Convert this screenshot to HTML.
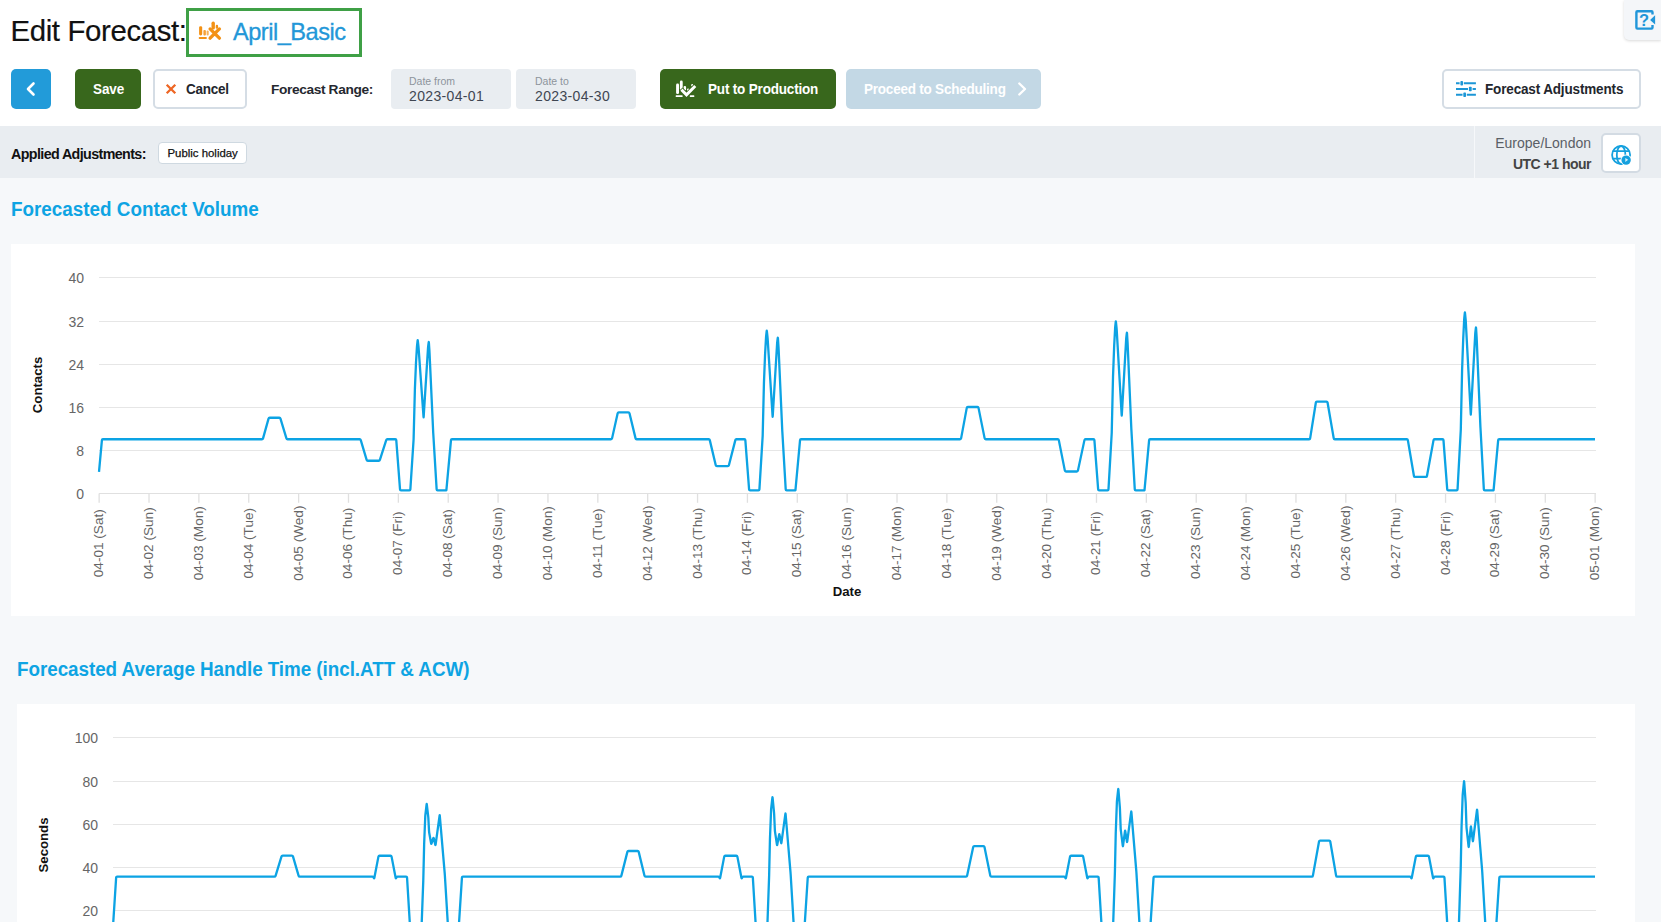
<!DOCTYPE html>
<html>
<head>
<meta charset="utf-8">
<title>Edit Forecast</title>
<style>
*{box-sizing:border-box;margin:0;padding:0}
html,body{width:1661px;height:922px;overflow:hidden;background:#f6f8fa;font-family:"Liberation Sans",sans-serif;color:#222}
.abs{position:absolute}
.t{position:absolute;white-space:nowrap}
#top{position:absolute;left:0;top:0;width:1661px;height:126px;background:#fff}
#bar{position:absolute;left:0;top:126px;width:1661px;height:52px;background:#e9edf1}
.namebox{position:absolute;left:186px;top:8px;width:176px;height:49px;border:3px solid #3fa046;background:#fff}
.btn{position:absolute;top:69px;height:40px;border-radius:5px}
.b-back{left:11px;width:40px;background:#229bd9}
.b-save{left:75px;width:66px;background:#38671c}
.b-cancel{left:153px;width:94px;background:#fff;border:2px solid #d5dde5}
.b-prod{left:660px;width:176px;background:#38671c}
.b-sched{left:846px;width:195px;background:#c3d8e5}
.b-adj{left:1442px;width:199px;background:#fff;border:2px solid #d5dde5}
.bt{font-weight:bold;font-size:13.5px;line-height:16px;transform:scaleY(1.07);transform-origin:0 76%}
.inp{position:absolute;top:69px;width:120px;height:40px;background:#e9edf1;border-radius:4px}
.chip{position:absolute;left:158px;top:142px;width:89px;height:22px;background:#fff;border:1px solid #cfd9e1;border-radius:4px}
.sec{font-weight:bold;font-size:18.85px;line-height:22px;color:#0ea4e3;transform:scaleY(1.06);transform-origin:0 78%}
.panel{position:absolute;background:#fff}
svg.ch{position:absolute;overflow:hidden}
svg.ch line{shape-rendering:crispEdges}
.yl{font-size:14px;fill:#666;font-family:"Liberation Sans",sans-serif}
.xl{font-size:13.6px;fill:#666;font-family:"Liberation Sans",sans-serif}
.at{font-size:13.2px;font-weight:bold;fill:#111;font-family:"Liberation Sans",sans-serif}
</style>
</head>
<body>
<div id="top"></div>
<div id="bar"></div>

<!-- title -->
<div class="t" id="t_h1" style="left:10.5px;top:12.7px;-webkit-text-stroke:0.2px #111;font-size:29.4px;line-height:36px;color:#111;letter-spacing:-0.37px">Edit Forecast:</div>
<div class="namebox"></div>
<svg class="abs" style="left:196px;top:18px" width="26" height="24" viewBox="196 18 26 24">
  <g fill="#f39114">
    <rect x="199.1" y="26.2" width="3.1" height="9.3" rx="1.4"/>
    <rect x="203.4" y="30" width="2.5" height="5.5" rx="1" opacity="0.85"/>
    <rect x="206.6" y="30.6" width="2.1" height="4.9" rx="1" opacity="0.7"/>
    <rect x="198.7" y="37.1" width="8.2" height="1.9" rx="0.9"/>
    <rect x="211.5" y="21.6" width="3.4" height="8" rx="1.6"/>
    <rect x="215.7" y="24.8" width="2.4" height="4" rx="1.1"/>
  </g>
  <path d="M210.1 28.9l9.3 9.3M219.4 28.9l-9.3 9.3" fill="none" stroke="#f39114" stroke-width="3.3" stroke-linecap="round"/>
</svg>
<div class="t" id="t_name" style="left:233px;top:16.5px;-webkit-text-stroke:0.3px #2397d8;font-size:23.6px;line-height:30px;color:#2397d8;letter-spacing:-0.5px">April_Basic</div>

<!-- toolbar -->
<div class="btn b-back"><svg class="abs" style="left:13px;top:12px" width="14" height="16" viewBox="0 0 14 16"><path d="M9.5 2.5L4 8l5.5 5.5" fill="none" stroke="#fff" stroke-width="2.6" stroke-linecap="round" stroke-linejoin="round"/></svg></div>
<div class="btn b-save"></div>
<div class="t bt" id="t_save" style="left:93px;top:81.5px;color:#fff;letter-spacing:-0.1px">Save</div>
<div class="btn b-cancel"></div>
<svg class="abs" style="left:164px;top:82px" width="14" height="14" viewBox="0 0 14 14"><path d="M2.700 2.700l8.600 8.600M11.300 2.700l-8.600 8.600" fill="none" stroke="#ee6624" stroke-width="2.300"/></svg>
<div class="t bt" id="t_cancel" style="left:186px;top:81.5px;color:#23262d;letter-spacing:-0.25px">Cancel</div>
<div class="t" id="t_range" style="left:271px;top:81.5px;font-size:13.7px;line-height:16px;font-weight:bold;color:#25282f;letter-spacing:-0.36px">Forecast Range:</div>
<div class="inp" style="left:391px"></div>
<div class="t" id="t_dfl" style="left:409px;top:75px;font-size:10.5px;line-height:12px;color:#8d949c">Date from</div>
<div class="t" id="t_dfv" style="left:409px;top:88px;font-size:14px;line-height:16px;color:#3f4652;letter-spacing:0.35px">2023-04-01</div>
<div class="inp" style="left:516px"></div>
<div class="t" id="t_dtl" style="left:535px;top:75px;font-size:10.5px;line-height:12px;color:#8d949c">Date to</div>
<div class="t" id="t_dtv" style="left:535px;top:88px;font-size:14px;line-height:16px;color:#3f4652;letter-spacing:0.35px">2023-04-30</div>

<div class="btn b-prod"></div>
<svg class="abs" style="left:674px;top:78px" width="24" height="22" viewBox="674 78 24 22">
  <g fill="#fff">
    <rect x="676.1" y="83.6" width="2.9" height="10.5" rx="1.3"/>
    <rect x="679.9" y="80.6" width="2.8" height="9.5" rx="1.3"/>
    <rect x="683.6" y="86" width="2.5" height="4.6" rx="1.1"/>
    <rect x="687" y="88.6" width="2.1" height="2.6" rx="1"/>
    <rect x="691.2" y="84" width="2" height="2.6" rx="0.9"/>
    <rect x="675.7" y="95.2" width="6.9" height="1.8" rx="0.5"/>
    <rect x="689.8" y="95.2" width="4.5" height="1.8" rx="0.5"/>
  </g>
  <path d="M682.5 90.7l4 4.1l7.7-7.8" fill="none" stroke="#38671c" stroke-width="4.6" stroke-linecap="square" stroke-linejoin="miter"/>
  <path d="M682.5 90.7l4 4.1l7.7-7.8" fill="none" stroke="#fff" stroke-width="3" stroke-linecap="square" stroke-linejoin="miter"/>
</svg>
<div class="t bt" id="t_prod" style="left:708px;top:81.5px;color:#fff;letter-spacing:-0.18px">Put to Production</div>
<div class="btn b-sched"></div>
<div class="t bt" id="t_sched" style="left:864px;top:81.5px;color:#fff;letter-spacing:-0.22px">Proceed to Scheduling</div>
<svg class="abs" style="left:1015px;top:81px" width="14" height="16" viewBox="0 0 14 16"><path d="M4.3 2.5L10 8l-5.700 5.500" fill="none" stroke="#fff" stroke-width="2.4" stroke-linecap="round" stroke-linejoin="round"/></svg>

<div class="btn b-adj"></div>
<svg class="abs" style="left:1454px;top:78px" width="24" height="22" viewBox="1454 78 24 22">
  <g fill="none" stroke="#1c96d6" stroke-width="2">
    <path d="M1456 83.3h3.6M1463.800 83.3h12.100M1456 89h12M1472.600 89h3.300M1456 94.800h6.500M1466.800 94.800h9.100"/>
  </g>
  <g fill="#1c96d6">
    <rect x="1460.400" y="81.100" width="2.600" height="4.400" rx="0.8"/>
    <rect x="1468.900" y="86.800" width="2.800" height="4.400" rx="0.8"/>
    <rect x="1463.300" y="92.600" width="2.700" height="4.400" rx="0.800"/>
  </g>
</svg>
<div class="t bt" id="t_adj" style="left:1485px;top:81.5px;color:#23262d;letter-spacing:-0.15px">Forecast Adjustments</div>

<!-- applied adjustments bar -->
<div class="t" id="t_applied" style="left:11px;top:145.600px;font-size:14.3px;line-height:16px;font-weight:bold;color:#111;letter-spacing:-0.62px">Applied Adjustments:</div>
<div class="chip"></div>
<div class="t" id="t_chip" style="left:167.500px;top:146px;font-size:11.4px;line-height:14px;color:#111;-webkit-text-stroke:0.25px #111">Public holiday</div>
<div class="abs" style="left:1474px;top:126px;width:1px;height:52px;background:#f6f8fa"></div>
<div class="t" id="t_tz" style="right:70px;top:134px;font-size:14px;line-height:18px;color:#5a5f66;text-align:right">Europe/London</div>
<div class="t" id="t_utc" style="right:70px;top:155.1px;font-size:14px;line-height:18px;color:#444;font-weight:bold;text-align:right;letter-spacing:-0.5px">UTC +1 hour</div>
<div class="abs" style="left:1601px;top:133px;width:40px;height:40px;background:#fff;border:2px solid #d3dbe3;border-radius:5px"></div>
<svg class="abs" style="left:1608px;top:142px" width="28" height="26" viewBox="1608 142 28 26">
  <g fill="none" stroke="#14a0de" stroke-width="1.800">
    <circle cx="1621.100" cy="155" r="9"/>
    <ellipse cx="1621.100" cy="155" rx="4.300" ry="9"/>
    <path d="M1612.800 151.200h16.600M1612.800 158.600h16.600"/>
  </g>
  <circle cx="1626.100" cy="160.100" r="5.600" fill="#fff"/>
  <circle cx="1626.100" cy="160.100" r="4.700" fill="#14a0de"/>
  <path d="M1625.300 157.900v4.200l2.900-2.300z" fill="#d8effa"/>
</svg>

<!-- help tab -->
<div class="abs" style="left:1624px;top:0;width:37px;height:40px;background:#f4f6f9;border-bottom-left-radius:5px;box-shadow:0 1px 3px rgba(0,0,0,0.15)"></div>
<svg class="abs" style="left:1633px;top:8px" width="26" height="24" viewBox="1633 8 26 24">
  <path d="M1652.500 14.600V12.200a1 1 0 0 0-1-1H1637.400a1 1 0 0 0-1 1v15.400a1 1 0 0 0 1 1h14.100a1 1 0 0 0 1-1v-2.700" fill="none" stroke="#2196d9" stroke-width="2.400"/>
  <path d="M1650.100 19.900l5-4.600v9.200z" fill="#2196d9"/>
  <text x="1644" y="25.900" text-anchor="middle" font-family="Liberation Sans, sans-serif" font-weight="bold" font-size="16.500" fill="#2196d9">?</text>
</svg>

<!-- section 1 -->
<div class="t sec" id="t_sec1" style="left:11px;top:198.800px">Forecasted Contact Volume</div>
<div class="panel" style="left:11px;top:243.500px;width:1624px;height:372.200px"></div>
<svg class="ch" style="left:11px;top:244px" width="1624" height="371" viewBox="11 244 1624 371">
<line x1="98.5" x2="1596.0" y1="450.5" y2="450.5" stroke="#e6e6e6"/>
<line x1="98.5" x2="1596.0" y1="407.5" y2="407.5" stroke="#e6e6e6"/>
<line x1="98.5" x2="1596.0" y1="364.5" y2="364.5" stroke="#e6e6e6"/>
<line x1="98.5" x2="1596.0" y1="321.5" y2="321.5" stroke="#e6e6e6"/>
<line x1="98.5" x2="1596.0" y1="277.5" y2="277.5" stroke="#e6e6e6"/>
<line x1="98.5" x2="1596.0" y1="493.5" y2="493.5" stroke="#e0e0e0"/>
<line x1="99.15" x2="99.15" y1="493.5" y2="502.8" stroke="#e0e0e0" stroke-width="1.3" style="shape-rendering:auto"/>
<line x1="149.02" x2="149.02" y1="493.5" y2="502.8" stroke="#e0e0e0" stroke-width="1.3" style="shape-rendering:auto"/>
<line x1="198.88" x2="198.88" y1="493.5" y2="502.8" stroke="#e0e0e0" stroke-width="1.3" style="shape-rendering:auto"/>
<line x1="248.75" x2="248.75" y1="493.5" y2="502.8" stroke="#e0e0e0" stroke-width="1.3" style="shape-rendering:auto"/>
<line x1="298.62" x2="298.62" y1="493.5" y2="502.8" stroke="#e0e0e0" stroke-width="1.3" style="shape-rendering:auto"/>
<line x1="348.48" x2="348.48" y1="493.5" y2="502.8" stroke="#e0e0e0" stroke-width="1.3" style="shape-rendering:auto"/>
<line x1="398.35" x2="398.35" y1="493.5" y2="502.8" stroke="#e0e0e0" stroke-width="1.3" style="shape-rendering:auto"/>
<line x1="448.22" x2="448.22" y1="493.5" y2="502.8" stroke="#e0e0e0" stroke-width="1.3" style="shape-rendering:auto"/>
<line x1="498.08" x2="498.08" y1="493.5" y2="502.8" stroke="#e0e0e0" stroke-width="1.3" style="shape-rendering:auto"/>
<line x1="547.95" x2="547.95" y1="493.5" y2="502.8" stroke="#e0e0e0" stroke-width="1.3" style="shape-rendering:auto"/>
<line x1="597.82" x2="597.82" y1="493.5" y2="502.8" stroke="#e0e0e0" stroke-width="1.3" style="shape-rendering:auto"/>
<line x1="647.68" x2="647.68" y1="493.5" y2="502.8" stroke="#e0e0e0" stroke-width="1.3" style="shape-rendering:auto"/>
<line x1="697.55" x2="697.55" y1="493.5" y2="502.8" stroke="#e0e0e0" stroke-width="1.3" style="shape-rendering:auto"/>
<line x1="747.42" x2="747.42" y1="493.5" y2="502.8" stroke="#e0e0e0" stroke-width="1.3" style="shape-rendering:auto"/>
<line x1="797.28" x2="797.28" y1="493.5" y2="502.8" stroke="#e0e0e0" stroke-width="1.3" style="shape-rendering:auto"/>
<line x1="847.15" x2="847.15" y1="493.5" y2="502.8" stroke="#e0e0e0" stroke-width="1.3" style="shape-rendering:auto"/>
<line x1="897.02" x2="897.02" y1="493.5" y2="502.8" stroke="#e0e0e0" stroke-width="1.3" style="shape-rendering:auto"/>
<line x1="946.88" x2="946.88" y1="493.5" y2="502.8" stroke="#e0e0e0" stroke-width="1.3" style="shape-rendering:auto"/>
<line x1="996.75" x2="996.75" y1="493.5" y2="502.8" stroke="#e0e0e0" stroke-width="1.3" style="shape-rendering:auto"/>
<line x1="1046.62" x2="1046.62" y1="493.5" y2="502.8" stroke="#e0e0e0" stroke-width="1.3" style="shape-rendering:auto"/>
<line x1="1096.48" x2="1096.48" y1="493.5" y2="502.8" stroke="#e0e0e0" stroke-width="1.3" style="shape-rendering:auto"/>
<line x1="1146.35" x2="1146.35" y1="493.5" y2="502.8" stroke="#e0e0e0" stroke-width="1.3" style="shape-rendering:auto"/>
<line x1="1196.22" x2="1196.22" y1="493.5" y2="502.8" stroke="#e0e0e0" stroke-width="1.3" style="shape-rendering:auto"/>
<line x1="1246.08" x2="1246.08" y1="493.5" y2="502.8" stroke="#e0e0e0" stroke-width="1.3" style="shape-rendering:auto"/>
<line x1="1295.95" x2="1295.95" y1="493.5" y2="502.8" stroke="#e0e0e0" stroke-width="1.3" style="shape-rendering:auto"/>
<line x1="1345.82" x2="1345.82" y1="493.5" y2="502.8" stroke="#e0e0e0" stroke-width="1.3" style="shape-rendering:auto"/>
<line x1="1395.68" x2="1395.68" y1="493.5" y2="502.8" stroke="#e0e0e0" stroke-width="1.3" style="shape-rendering:auto"/>
<line x1="1445.55" x2="1445.55" y1="493.5" y2="502.8" stroke="#e0e0e0" stroke-width="1.3" style="shape-rendering:auto"/>
<line x1="1495.42" x2="1495.42" y1="493.5" y2="502.8" stroke="#e0e0e0" stroke-width="1.3" style="shape-rendering:auto"/>
<line x1="1545.28" x2="1545.28" y1="493.5" y2="502.8" stroke="#e0e0e0" stroke-width="1.3" style="shape-rendering:auto"/>
<line x1="1595.15" x2="1595.15" y1="493.5" y2="502.8" stroke="#e0e0e0" stroke-width="1.3" style="shape-rendering:auto"/>
<text x="84" y="498.6" text-anchor="end" class="yl">0</text>
<text x="84" y="455.6" text-anchor="end" class="yl">8</text>
<text x="84" y="412.6" text-anchor="end" class="yl">16</text>
<text x="84" y="369.6" text-anchor="end" class="yl">24</text>
<text x="84" y="326.6" text-anchor="end" class="yl">32</text>
<text x="84" y="283.4" text-anchor="end" class="yl">40</text>
<text transform="translate(103.1 543.2) rotate(-90)" text-anchor="middle" class="xl">04-01 (Sat)</text>
<text transform="translate(153.0 543.2) rotate(-90)" text-anchor="middle" class="xl">04-02 (Sun)</text>
<text transform="translate(202.8 543.2) rotate(-90)" text-anchor="middle" class="xl">04-03 (Mon)</text>
<text transform="translate(252.7 543.2) rotate(-90)" text-anchor="middle" class="xl">04-04 (Tue)</text>
<text transform="translate(302.6 543.2) rotate(-90)" text-anchor="middle" class="xl">04-05 (Wed)</text>
<text transform="translate(352.4 543.2) rotate(-90)" text-anchor="middle" class="xl">04-06 (Thu)</text>
<text transform="translate(402.3 543.2) rotate(-90)" text-anchor="middle" class="xl">04-07 (Fri)</text>
<text transform="translate(452.2 543.2) rotate(-90)" text-anchor="middle" class="xl">04-08 (Sat)</text>
<text transform="translate(502.0 543.2) rotate(-90)" text-anchor="middle" class="xl">04-09 (Sun)</text>
<text transform="translate(551.9 543.2) rotate(-90)" text-anchor="middle" class="xl">04-10 (Mon)</text>
<text transform="translate(601.8 543.2) rotate(-90)" text-anchor="middle" class="xl">04-11 (Tue)</text>
<text transform="translate(651.6 543.2) rotate(-90)" text-anchor="middle" class="xl">04-12 (Wed)</text>
<text transform="translate(701.5 543.2) rotate(-90)" text-anchor="middle" class="xl">04-13 (Thu)</text>
<text transform="translate(751.4 543.2) rotate(-90)" text-anchor="middle" class="xl">04-14 (Fri)</text>
<text transform="translate(801.2 543.2) rotate(-90)" text-anchor="middle" class="xl">04-15 (Sat)</text>
<text transform="translate(851.1 543.2) rotate(-90)" text-anchor="middle" class="xl">04-16 (Sun)</text>
<text transform="translate(901.0 543.2) rotate(-90)" text-anchor="middle" class="xl">04-17 (Mon)</text>
<text transform="translate(950.8 543.2) rotate(-90)" text-anchor="middle" class="xl">04-18 (Tue)</text>
<text transform="translate(1000.7 543.2) rotate(-90)" text-anchor="middle" class="xl">04-19 (Wed)</text>
<text transform="translate(1050.6 543.2) rotate(-90)" text-anchor="middle" class="xl">04-20 (Thu)</text>
<text transform="translate(1100.4 543.2) rotate(-90)" text-anchor="middle" class="xl">04-21 (Fri)</text>
<text transform="translate(1150.3 543.2) rotate(-90)" text-anchor="middle" class="xl">04-22 (Sat)</text>
<text transform="translate(1200.2 543.2) rotate(-90)" text-anchor="middle" class="xl">04-23 (Sun)</text>
<text transform="translate(1250.0 543.2) rotate(-90)" text-anchor="middle" class="xl">04-24 (Mon)</text>
<text transform="translate(1299.9 543.2) rotate(-90)" text-anchor="middle" class="xl">04-25 (Tue)</text>
<text transform="translate(1349.8 543.2) rotate(-90)" text-anchor="middle" class="xl">04-26 (Wed)</text>
<text transform="translate(1399.6 543.2) rotate(-90)" text-anchor="middle" class="xl">04-27 (Thu)</text>
<text transform="translate(1449.5 543.2) rotate(-90)" text-anchor="middle" class="xl">04-28 (Fri)</text>
<text transform="translate(1499.4 543.2) rotate(-90)" text-anchor="middle" class="xl">04-29 (Sat)</text>
<text transform="translate(1549.2 543.2) rotate(-90)" text-anchor="middle" class="xl">04-30 (Sun)</text>
<text transform="translate(1599.1 543.2) rotate(-90)" text-anchor="middle" class="xl">05-01 (Mon)</text>
<text transform="translate(42 385) rotate(-90)" text-anchor="middle" class="at">Contacts</text>
<text x="847" y="596" text-anchor="middle" class="at">Date</text>
<path d="M99.00 471.84 L101.92 440.15 Q102.00 439.25 102.90 439.25 L261.90 439.25 Q262.80 439.25 263.04 438.38 L268.56 418.62 Q268.80 417.75 269.70 417.75 L279.30 417.75 Q280.20 417.75 280.46 418.61 L286.44 438.39 Q286.70 439.25 287.60 439.25 L359.60 439.25 Q360.50 439.25 360.76 440.11 L366.64 459.89 Q366.90 460.75 367.80 460.75 L378.70 460.75 Q379.60 460.75 379.88 459.89 L386.22 440.11 Q386.50 439.25 387.40 439.25 L395.30 439.25 Q396.20 439.25 396.27 440.15 L400.03 489.42 Q400.10 490.31 401.00 490.31 L409.40 490.31 Q410.30 490.31 410.36 489.41 L413.54 440.28 Q413.60 439.38 413.62 438.48 L414.88 389.73 Q414.90 388.83 414.94 387.93 L415.96 363.69 Q416.00 362.79 416.05 361.89 L416.95 346.84 Q417.00 345.94 417.10 345.05 L417.60 340.71 Q417.70 339.81 417.80 340.71 L418.40 345.81 Q418.50 346.71 418.56 347.60 L423.54 416.85 Q423.60 417.75 423.66 416.85 L428.04 347.63 Q428.10 346.73 428.22 345.84 L428.68 342.32 Q428.80 341.43 428.86 342.32 L429.44 351.14 Q429.50 352.04 429.54 352.93 L433.16 431.47 Q433.20 432.37 433.25 433.27 L436.65 489.41 Q436.70 490.31 437.60 490.31 L445.50 490.31 Q446.40 490.31 446.38 490.31 L446.38 490.31 Q446.37 490.31 446.45 489.42 L450.98 440.15 Q451.07 439.25 451.97 439.25 L610.97 439.25 Q611.87 439.25 612.06 438.37 L617.67 413.25 Q617.87 412.38 618.77 412.38 L628.37 412.38 Q629.27 412.38 629.48 413.25 L635.56 438.38 Q635.77 439.25 636.67 439.25 L708.67 439.25 Q709.57 439.25 709.78 440.13 L715.76 465.25 Q715.97 466.12 716.87 466.12 L727.77 466.12 Q728.67 466.12 728.89 465.25 L735.34 440.12 Q735.57 439.25 736.47 439.25 L744.37 439.25 Q745.27 439.25 745.34 440.15 L749.10 489.42 Q749.17 490.31 750.07 490.31 L758.47 490.31 Q759.37 490.31 759.42 489.41 L762.61 436.90 Q762.67 436.00 762.69 435.10 L763.94 383.15 Q763.97 382.25 764.00 381.35 L765.03 355.47 Q765.07 354.57 765.12 353.67 L766.02 337.55 Q766.07 336.65 766.16 335.76 L766.67 331.03 Q766.77 330.14 766.86 331.03 L767.47 336.57 Q767.57 337.47 767.62 338.36 L772.61 416.31 Q772.67 417.21 772.72 416.31 L777.11 343.48 Q777.17 342.58 777.28 341.69 L777.75 338.02 Q777.87 337.12 777.92 338.02 L778.51 347.14 Q778.57 348.04 778.61 348.94 L782.23 429.75 Q782.27 430.65 782.32 431.55 L785.71 489.41 Q785.77 490.31 786.67 490.31 L794.57 490.31 Q795.47 490.31 795.45 490.31 L795.45 490.31 Q795.43 490.31 795.52 489.42 L800.05 440.15 Q800.13 439.25 801.03 439.25 L960.03 439.25 Q960.93 439.25 961.10 438.37 L966.77 407.88 Q966.93 407.00 967.83 407.00 L977.43 407.00 Q978.33 407.00 978.51 407.88 L984.66 438.37 Q984.83 439.25 985.73 439.25 L1057.73 439.25 Q1058.63 439.25 1058.81 440.13 L1064.86 470.62 Q1065.03 471.50 1065.93 471.50 L1076.83 471.50 Q1077.73 471.50 1077.92 470.62 L1084.45 440.13 Q1084.63 439.25 1085.53 439.25 L1093.43 439.25 Q1094.33 439.25 1094.40 440.15 L1098.16 489.42 Q1098.23 490.31 1099.13 490.31 L1107.53 490.31 Q1108.43 490.31 1108.48 489.41 L1111.68 433.70 Q1111.73 432.80 1111.75 431.90 L1113.01 376.94 Q1113.03 376.04 1113.07 375.14 L1114.10 347.70 Q1114.13 346.80 1114.18 345.90 L1115.09 328.78 Q1115.13 327.88 1115.22 326.98 L1115.74 321.90 Q1115.83 321.00 1115.93 321.90 L1116.54 327.84 Q1116.63 328.74 1116.69 329.64 L1121.68 415.24 Q1121.73 416.14 1121.79 415.24 L1126.18 338.81 Q1126.23 337.91 1126.34 337.02 L1126.82 333.18 Q1126.93 332.29 1126.99 333.19 L1127.58 342.64 Q1127.63 343.54 1127.67 344.44 L1131.29 427.82 Q1131.33 428.71 1131.38 429.61 L1134.78 489.41 Q1134.83 490.31 1135.73 490.31 L1143.63 490.31 Q1144.53 490.31 1144.52 490.31 L1144.52 490.31 Q1144.50 490.31 1144.58 489.42 L1149.12 440.15 Q1149.20 439.25 1150.10 439.25 L1309.10 439.25 Q1310.00 439.25 1310.14 438.36 L1315.86 402.51 Q1316.00 401.62 1316.90 401.62 L1326.50 401.62 Q1327.40 401.62 1327.55 402.51 L1333.75 438.36 Q1333.90 439.25 1334.80 439.25 L1406.80 439.25 Q1407.70 439.25 1407.85 440.14 L1413.95 475.99 Q1414.10 476.88 1415.00 476.88 L1425.90 476.88 Q1426.80 476.88 1426.96 475.99 L1433.54 440.14 Q1433.70 439.25 1434.60 439.25 L1442.50 439.25 Q1443.40 439.25 1443.47 440.15 L1447.23 489.42 Q1447.30 490.31 1448.20 490.31 L1456.60 490.31 Q1457.50 490.31 1457.55 489.41 L1460.75 430.50 Q1460.80 429.60 1460.82 428.70 L1462.08 370.73 Q1462.10 369.83 1462.13 368.93 L1463.17 339.93 Q1463.20 339.03 1463.25 338.13 L1464.15 320.01 Q1464.20 319.11 1464.29 318.21 L1464.81 312.76 Q1464.90 311.86 1464.99 312.76 L1465.61 319.12 Q1465.70 320.01 1465.75 320.91 L1470.75 414.16 Q1470.80 415.06 1470.85 414.16 L1475.25 333.62 Q1475.30 332.73 1475.41 331.83 L1475.89 327.81 Q1476.00 326.91 1476.05 327.81 L1476.65 337.64 Q1476.70 338.54 1476.74 339.44 L1480.36 425.67 Q1480.40 426.56 1480.45 427.46 L1483.85 489.41 Q1483.90 490.31 1484.80 490.31 L1492.70 490.31 Q1493.60 490.31 1493.58 490.31 L1493.58 490.31 Q1493.57 490.31 1493.65 489.42 L1498.18 440.15 Q1498.27 439.25 1499.17 439.25 L1595.00 439.25" fill="none" stroke="#0ca3e4" stroke-width="2.3" stroke-linejoin="round" stroke-linecap="butt"/>
</svg>

<!-- section 2 -->
<div class="t sec" id="t_sec2" style="left:17px;top:658.800px;letter-spacing:-0.05px">Forecasted Average Handle Time (incl.ATT &amp; ACW)</div>
<div class="panel" style="left:17px;top:704px;width:1618px;height:218px"></div>
<svg class="ch" style="left:17px;top:704px" width="1618" height="218" viewBox="17 704 1618 218">
<line x1="112.5" x2="1596.0" y1="910.5" y2="910.5" stroke="#e6e6e6"/>
<line x1="112.5" x2="1596.0" y1="867.5" y2="867.5" stroke="#e6e6e6"/>
<line x1="112.5" x2="1596.0" y1="824.5" y2="824.5" stroke="#e6e6e6"/>
<line x1="112.5" x2="1596.0" y1="781.5" y2="781.5" stroke="#e6e6e6"/>
<line x1="112.5" x2="1596.0" y1="737.5" y2="737.5" stroke="#e6e6e6"/>
<text x="98" y="915.6" text-anchor="end" class="yl">20</text>
<text x="98" y="872.6" text-anchor="end" class="yl">40</text>
<text x="98" y="829.6" text-anchor="end" class="yl">60</text>
<text x="98" y="786.6" text-anchor="end" class="yl">80</text>
<text x="98" y="743.4" text-anchor="end" class="yl">100</text>
<text transform="translate(48 845) rotate(-90)" text-anchor="middle" class="at">Seconds</text>
<path d="M113.00 926.37 L116.14 877.62 Q116.20 876.72 117.10 876.72 L274.40 876.72 Q275.30 876.72 275.56 875.86 L281.54 856.41 Q281.80 855.55 282.70 855.55 L291.80 855.55 Q292.70 855.55 292.95 856.42 L298.65 875.86 Q298.90 876.72 299.80 876.72 L372.30 876.72 Q373.20 876.72 373.61 877.52 L373.79 877.86 Q374.20 878.66 374.37 877.78 L378.43 856.65 Q378.60 855.77 379.50 855.77 L390.50 855.77 Q391.40 855.77 391.57 856.65 L395.63 877.78 Q395.80 878.66 396.21 877.86 L396.39 877.52 Q396.80 876.72 397.70 876.72 L406.10 876.72 Q407.00 876.72 407.05 877.62 L411.55 951.85 Q411.60 952.75 412.50 952.75 L419.70 952.75 Q420.60 952.75 420.63 951.85 L423.27 880.85 Q423.30 879.95 423.32 879.05 L424.13 844.87 Q424.15 843.97 424.19 843.07 L425.26 816.39 Q425.30 815.49 425.40 814.59 L426.60 804.39 Q426.70 803.50 426.80 804.39 L428.20 816.28 Q428.30 817.17 428.35 818.07 L429.05 831.17 Q429.10 832.07 429.26 832.96 L431.14 843.43 Q431.30 844.32 431.57 843.46 L433.23 838.27 Q433.50 837.41 433.71 838.28 L435.29 844.74 Q435.50 845.62 435.62 844.72 L439.58 815.62 Q439.70 814.73 439.78 815.62 L444.72 873.46 Q444.80 874.36 444.86 875.26 L449.54 951.85 Q449.60 952.75 450.50 952.75 L455.40 952.75 Q456.30 952.75 456.70 952.75 L456.70 952.75 Q457.10 952.75 457.16 951.85 L461.94 877.62 Q462.00 876.72 462.90 876.72 L620.20 876.72 Q621.10 876.72 621.32 875.85 L627.38 851.89 Q627.60 851.02 628.50 851.02 L637.60 851.02 Q638.50 851.02 638.71 851.89 L644.49 875.85 Q644.70 876.72 645.60 876.72 L718.10 876.72 Q719.00 876.72 719.41 877.52 L719.59 877.86 Q720.00 878.66 720.17 877.78 L724.23 856.65 Q724.40 855.77 725.30 855.77 L736.30 855.77 Q737.20 855.77 737.37 856.65 L741.43 877.78 Q741.60 878.66 742.01 877.86 L742.19 877.52 Q742.60 876.72 743.50 876.72 L751.90 876.72 Q752.80 876.72 752.85 877.62 L757.35 951.85 Q757.40 952.75 758.30 952.75 L765.50 952.75 Q766.40 952.75 766.43 951.85 L769.07 877.57 Q769.10 876.67 769.12 875.77 L769.93 839.98 Q769.95 839.08 769.98 838.18 L771.07 810.23 Q771.10 809.33 771.20 808.43 L772.40 797.69 Q772.50 796.80 772.59 797.70 L774.01 812.26 Q774.10 813.15 774.14 814.05 L774.86 830.07 Q774.90 830.97 775.03 831.86 L776.97 844.73 Q777.10 845.62 777.26 844.73 L779.14 834.62 Q779.30 833.74 779.48 834.62 L781.12 842.79 Q781.30 843.67 781.42 842.78 L785.38 813.89 Q785.50 813.00 785.58 813.90 L790.52 872.48 Q790.60 873.37 790.65 874.27 L795.35 951.85 Q795.40 952.75 796.30 952.75 L801.20 952.75 Q802.10 952.75 802.50 952.75 L802.50 952.75 Q802.90 952.75 802.96 951.85 L807.74 877.62 Q807.80 876.72 808.70 876.72 L966.00 876.72 Q966.90 876.72 967.09 875.84 L973.21 846.93 Q973.40 846.05 974.30 846.05 L983.40 846.05 Q984.30 846.05 984.48 846.93 L990.32 875.84 Q990.50 876.72 991.40 876.72 L1063.90 876.72 Q1064.80 876.72 1065.21 877.52 L1065.39 877.86 Q1065.80 878.66 1065.97 877.78 L1070.03 856.65 Q1070.20 855.77 1071.10 855.77 L1082.10 855.77 Q1083.00 855.77 1083.17 856.65 L1087.23 877.78 Q1087.40 878.66 1087.81 877.86 L1087.99 877.52 Q1088.40 876.72 1089.30 876.72 L1097.70 876.72 Q1098.60 876.72 1098.65 877.62 L1103.15 951.85 Q1103.20 952.75 1104.10 952.75 L1111.30 952.75 Q1112.20 952.75 1112.23 951.85 L1114.87 873.44 Q1114.90 872.54 1114.92 871.64 L1115.73 833.83 Q1115.75 832.93 1115.78 832.03 L1116.87 802.48 Q1116.90 801.58 1116.99 800.68 L1118.21 789.27 Q1118.30 788.38 1118.37 789.27 L1119.83 807.02 Q1119.90 807.91 1119.93 808.81 L1120.67 828.30 Q1120.70 829.20 1120.81 830.09 L1122.79 845.80 Q1122.90 846.70 1123.02 845.80 L1124.98 831.17 Q1125.10 830.28 1125.24 831.17 L1126.96 841.70 Q1127.10 842.59 1127.22 841.70 L1131.18 811.95 Q1131.30 811.06 1131.37 811.95 L1136.33 871.37 Q1136.40 872.26 1136.45 873.16 L1141.15 951.85 Q1141.20 952.75 1142.10 952.75 L1147.00 952.75 Q1147.90 952.75 1148.30 952.75 L1148.30 952.75 Q1148.70 952.75 1148.76 951.85 L1153.54 877.62 Q1153.60 876.72 1154.50 876.72 L1311.80 876.72 Q1312.70 876.72 1312.86 875.83 L1319.04 841.53 Q1319.20 840.65 1320.10 840.65 L1329.20 840.65 Q1330.10 840.65 1330.25 841.53 L1336.15 875.83 Q1336.30 876.72 1337.20 876.72 L1409.70 876.72 Q1410.60 876.72 1411.01 877.52 L1411.19 877.86 Q1411.60 878.66 1411.77 877.78 L1415.83 856.65 Q1416.00 855.77 1416.90 855.77 L1427.90 855.77 Q1428.80 855.77 1428.97 856.65 L1433.03 877.78 Q1433.20 878.66 1433.61 877.86 L1433.79 877.52 Q1434.20 876.72 1435.10 876.72 L1443.50 876.72 Q1444.40 876.72 1444.45 877.62 L1448.95 951.85 Q1449.00 952.75 1449.90 952.75 L1457.10 952.75 Q1458.00 952.75 1458.03 951.85 L1460.67 869.63 Q1460.70 868.73 1460.72 867.83 L1461.53 828.16 Q1461.55 827.26 1461.58 826.36 L1462.67 795.32 Q1462.70 794.42 1462.79 793.53 L1464.01 781.50 Q1464.10 780.60 1464.16 781.50 L1465.64 802.13 Q1465.70 803.03 1465.73 803.93 L1466.47 826.57 Q1466.50 827.47 1466.60 828.37 L1468.60 846.67 Q1468.70 847.56 1468.79 846.66 L1470.81 826.86 Q1470.90 825.96 1471.01 826.85 L1472.79 840.84 Q1472.90 841.73 1473.01 840.84 L1476.99 810.00 Q1477.10 809.11 1477.17 810.01 L1482.13 870.26 Q1482.20 871.16 1482.25 872.05 L1486.95 951.85 Q1487.00 952.75 1487.90 952.75 L1492.80 952.75 Q1493.70 952.75 1494.10 952.75 L1494.10 952.75 Q1494.50 952.75 1494.56 951.85 L1499.34 877.62 Q1499.40 876.72 1500.30 876.72 L1595.00 876.72" fill="none" stroke="#0ca3e4" stroke-width="2.3" stroke-linejoin="round"/>
</svg>
</body>
</html>
